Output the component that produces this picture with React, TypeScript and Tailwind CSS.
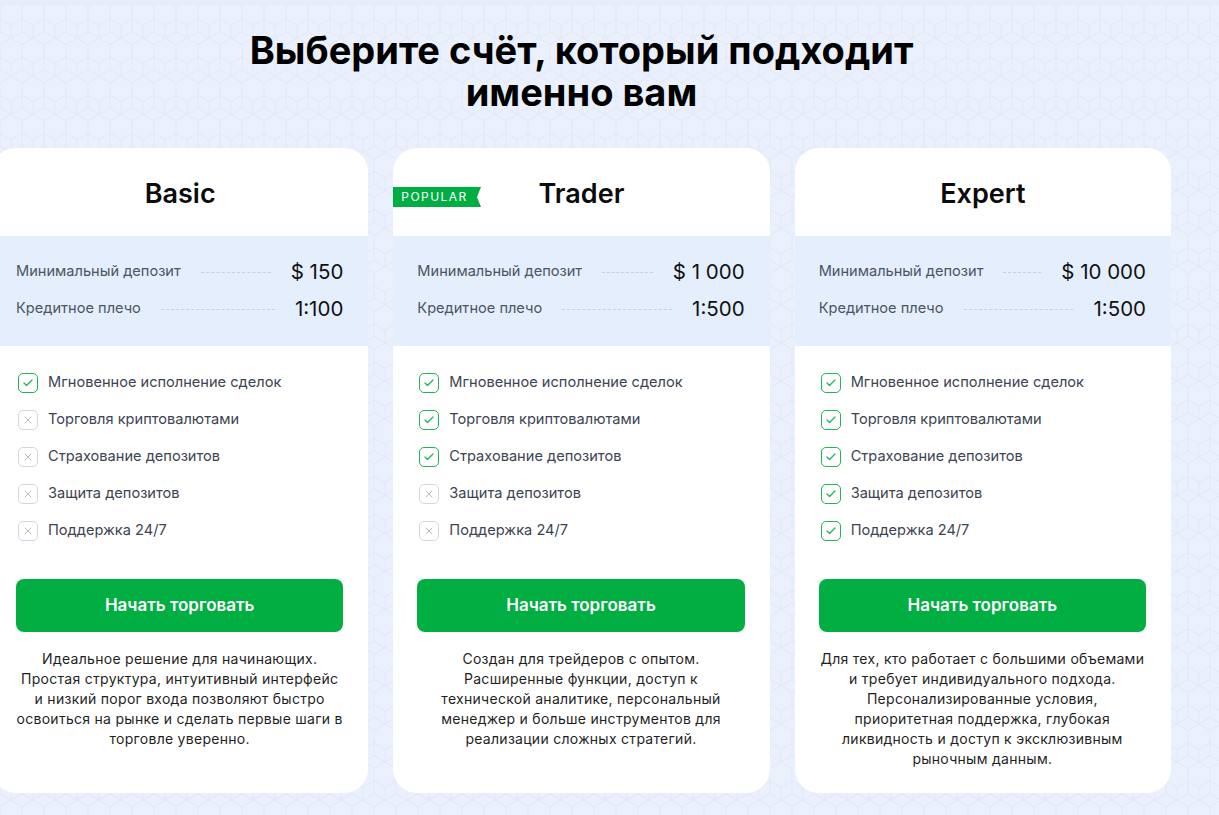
import { Check, X } from 'lucide-react'

type Plan = {
  name: string
  popular?: boolean
  deposit: string
  leverage: string
  features: boolean[]
  text: string
}

const FEATURES = [
  'Мгновенное исполнение сделок',
  'Торговля криптовалютами',
  'Страхование депозитов',
  'Защита депозитов',
  'Поддержка 24/7',
]

const PLANS: Plan[] = [
  {
    name: 'Basic',
    deposit: '$ 150',
    leverage: '1:100',
    features: [true, false, false, false, false],
    text: 'Идеальное решение для начинающих. Простая структура, интуитивный интерфейс и низкий порог входа позволяют быстро освоиться на рынке и сделать первые шаги в торговле уверенно.',
  },
  {
    name: 'Trader',
    popular: true,
    deposit: '$ 1 000',
    leverage: '1:500',
    features: [true, true, true, false, false],
    text: 'Создан для трейдеров с опытом. Расширенные функции, доступ к технической аналитике, персональный менеджер и больше инструментов для реализации сложных стратегий.',
  },
  {
    name: 'Expert',
    deposit: '$ 10 000',
    leverage: '1:500',
    features: [true, true, true, true, true],
    text: 'Для тех, кто работает с большими объемами и требует индивидуального подхода. Персонализированные условия, приоритетная поддержка, глубокая ликвидность и доступ к эксклюзивным рыночным данным.',
  },
]

function HexBackground() {
  return (
    <svg className="absolute inset-0 w-full h-full" aria-hidden="true">
      <defs>
        <pattern id="hex" width="22" height="38.1" patternUnits="userSpaceOnUse">
          <path
            d="M11 0 L22 6.35 L22 19.05 L11 25.4 L0 19.05 L0 6.35 Z M11 25.4 L11 38.1 M0 19.05 L0 31.75 L11 38.1 M22 19.05 L22 31.75 L11 38.1"
            fill="none"
            stroke="#e1e8f5"
            strokeWidth="1"
          />
        </pattern>
      </defs>
      <rect width="100%" height="100%" fill="url(#hex)" />
    </svg>
  )
}

function InfoRow({ label, value }: { label: string; value: string }) {
  return (
    <div className="flex items-center h-[28px]">
      <span className="text-[14.6px] text-[#4b5563]">{label}</span>
      <span className="flex-1 mx-5 border-t border-dashed border-[#c9d0dc]" />
      <span className="text-[20.5px] text-[#111]">{value}</span>
    </div>
  )
}

function PlanCard({ plan }: { plan: Plan }) {
  return (
    <div className="relative bg-white rounded-[24px] flex flex-col overflow-hidden">
      {plan.popular && (
        <div className="absolute left-0 top-[39px] h-[20px] flex items-center">
          <div className="h-full bg-[#00ae42] pl-2 pr-[6px] flex items-center text-[12px] tracking-[0.12em] text-white">
            POPULAR
          </div>
          <svg width="7" height="20" viewBox="0 0 7 20" className="block">
            <path d="M0 0 H7 L3 10 L7 20 H0 Z" fill="#00ae42" />
          </svg>
        </div>
      )}
      <div className="h-[88px] pt-[4px] flex items-center justify-center">
        <h2 className="text-[27px] font-semibold text-[#0b0b0b]">{plan.name}</h2>
      </div>
      <div className="bg-[#e4eefc] pl-6 pr-[25px] pt-[22px] pb-[23px] flex flex-col gap-[9px]">
        <InfoRow label="Минимальный депозит" value={plan.deposit} />
        <InfoRow label="Кредитное плечо" value={plan.leverage} />
      </div>
      <ul className="px-6 pt-[25px] flex flex-col gap-[13px]">
        {FEATURES.map((f, i) => (
          <li key={f} className="flex items-center h-[24px] gap-[10px] pl-[2px]">
            {plan.features[i] ? (
              <span className="w-5 h-5 rounded-[5px] border-[1.5px] border-[#22b457] flex items-center justify-center">
                <Check className="w-3 h-3 text-[#22b457]" strokeWidth={2.5} />
              </span>
            ) : (
              <span className="w-5 h-5 rounded-[5px] border-[1.5px] border-[#d4d8de] flex items-center justify-center">
                <X className="w-3 h-3 text-[#b6bcc5]" strokeWidth={2} />
              </span>
            )}
            <span className="text-[14.6px] text-[#3d4452]">{f}</span>
          </li>
        ))}
      </ul>
      <div className="pl-6 pr-[25px] pt-[36px] pb-6 flex flex-col">
        <button className="h-[53px] rounded-lg bg-[#00ae42] text-white text-[17px] font-semibold">
          Начать торговать
        </button>
        <p className="mt-[17px] text-center text-[14px] tracking-[0.02em] leading-[20px] text-[#1f1f1f]">
          {plan.text}
        </p>
      </div>
    </div>
  )
}

export default function App() {
  return (
    <div
      className="relative w-full min-h-[815px] bg-[#eaf1fd] overflow-hidden"
      style={{ fontFamily: 'Inter, "Noto Sans", sans-serif' }}
    >
      <HexBackground />
      <div className="absolute top-0 left-0 right-0 h-[5px] bg-[#e5edfb]" />
      <div className="relative pt-[29px]">
        <h1 className="w-[1179px] ml-[-8px] text-center text-[38px] leading-[42px] font-bold text-black">
          Выберите счёт, который подходит
          <br />
          именно вам
        </h1>
        <div className="mt-[35px] ml-[-8px] w-[1179px] grid grid-cols-3 gap-[25px]">
          {PLANS.map(p => (
            <PlanCard key={p.name} plan={p} />
          ))}
        </div>
      </div>
    </div>
  )
}
